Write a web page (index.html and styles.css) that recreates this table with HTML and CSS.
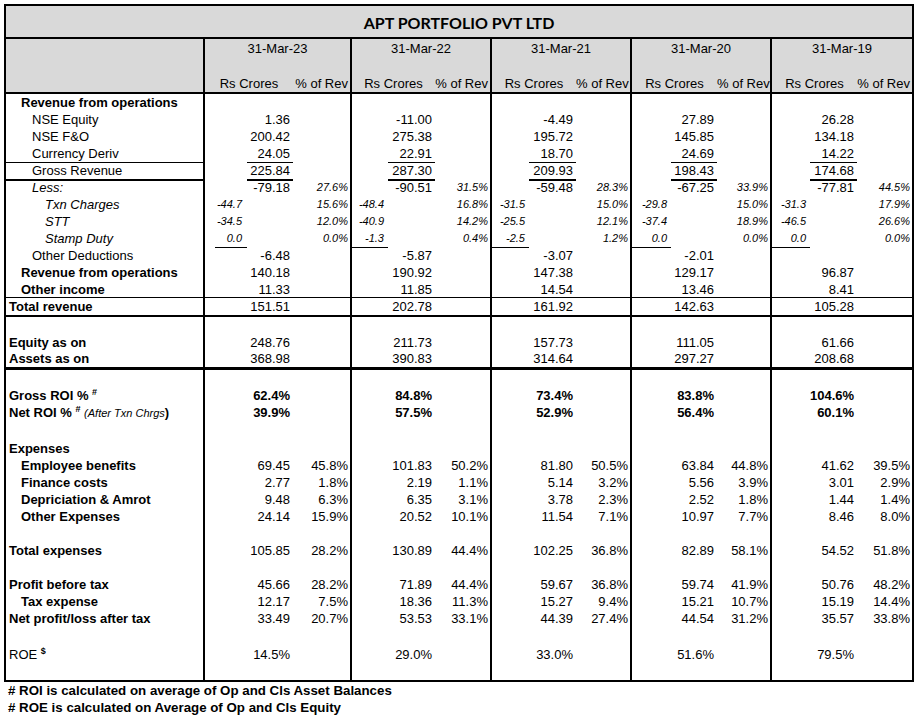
FILE: index.html
```html
<!DOCTYPE html>
<html>
<head>
<meta charset="utf-8">
<link rel="stylesheet" href="styles.css">
</head>
<body>
<div class="sheet">
  <div class="title">APT PORTFOLIO PVT LTD</div>
  <div class="hdr">
    <div class="row h1"><div class="lbl"></div>
      <div class="blk"><div class="d">31-Mar-23</div></div>
      <div class="blk"><div class="d">31-Mar-22</div></div>
      <div class="blk"><div class="d">31-Mar-21</div></div>
      <div class="blk"><div class="d">31-Mar-20</div></div>
      <div class="blk"><div class="d">31-Mar-19</div></div>
    </div>
    <div class="row h2"><div class="lbl"></div><div class="blk"></div><div class="blk"></div><div class="blk"></div><div class="blk"></div><div class="blk"></div></div>
    <div class="row h3"><div class="lbl"></div>
      <div class="blk"><div class="rc">Rs Crores</div><div class="c">% of Rev</div></div>
      <div class="blk"><div class="rc">Rs Crores</div><div class="c">% of Rev</div></div>
      <div class="blk"><div class="rc">Rs Crores</div><div class="c">% of Rev</div></div>
      <div class="blk"><div class="rc">Rs Crores</div><div class="c">% of Rev</div></div>
      <div class="blk"><div class="rc">Rs Crores</div><div class="c">% of Rev</div></div>
    </div>
  </div>

  <div class="row"><div class="lbl i1 bd">Revenue from operations</div><div class="blk"></div><div class="blk"></div><div class="blk"></div><div class="blk"></div><div class="blk"></div></div>

  <div class="row"><div class="lbl i2">NSE Equity</div>
    <div class="blk"><div class="b">1.36</div></div>
    <div class="blk"><div class="b">-11.00</div></div>
    <div class="blk"><div class="b">-4.49</div></div>
    <div class="blk"><div class="b">27.89</div></div>
    <div class="blk"><div class="b">26.28</div></div>
  </div>

  <div class="row"><div class="lbl i2">NSE F&amp;O</div>
    <div class="blk"><div class="b">200.42</div></div>
    <div class="blk"><div class="b">275.38</div></div>
    <div class="blk"><div class="b">195.72</div></div>
    <div class="blk"><div class="b">145.85</div></div>
    <div class="blk"><div class="b">134.18</div></div>
  </div>

  <div class="row"><div class="lbl i2 ul1">Currency Deriv</div>
    <div class="blk"><div class="b ul1">24.05</div></div>
    <div class="blk"><div class="b ul1">22.91</div></div>
    <div class="blk"><div class="b ul1">18.70</div></div>
    <div class="blk"><div class="b ul1">24.69</div></div>
    <div class="blk"><div class="b ul1">14.22</div></div>
  </div>

  <div class="row"><div class="lbl i2 ul2">Gross Revenue</div>
    <div class="blk"><div class="b ul2">225.84</div></div>
    <div class="blk"><div class="b ul2">287.30</div></div>
    <div class="blk"><div class="b ul2">209.93</div></div>
    <div class="blk"><div class="b ul2">198.43</div></div>
    <div class="blk"><div class="b ul2">174.68</div></div>
  </div>

  <div class="row"><div class="lbl i2 it">Less:</div>
    <div class="blk"><div class="b">-79.18</div><div class="c ci">27.6%</div></div>
    <div class="blk"><div class="b">-90.51</div><div class="c ci">31.5%</div></div>
    <div class="blk"><div class="b">-59.48</div><div class="c ci">28.3%</div></div>
    <div class="blk"><div class="b">-67.25</div><div class="c ci">33.9%</div></div>
    <div class="blk"><div class="b">-77.81</div><div class="c ci">44.5%</div></div>
  </div>

  <div class="row"><div class="lbl i3 it">Txn Charges</div>
    <div class="blk"><div class="a">-44.7</div><div class="c ci">15.6%</div></div>
    <div class="blk"><div class="a">-48.4</div><div class="c ci">16.8%</div></div>
    <div class="blk"><div class="a">-31.5</div><div class="c ci">15.0%</div></div>
    <div class="blk"><div class="a">-29.8</div><div class="c ci">15.0%</div></div>
    <div class="blk"><div class="a">-31.3</div><div class="c ci">17.9%</div></div>
  </div>

  <div class="row"><div class="lbl i3 it">STT</div>
    <div class="blk"><div class="a">-34.5</div><div class="c ci">12.0%</div></div>
    <div class="blk"><div class="a">-40.9</div><div class="c ci">14.2%</div></div>
    <div class="blk"><div class="a">-25.5</div><div class="c ci">12.1%</div></div>
    <div class="blk"><div class="a">-37.4</div><div class="c ci">18.9%</div></div>
    <div class="blk"><div class="a">-46.5</div><div class="c ci">26.6%</div></div>
  </div>

  <div class="row"><div class="lbl i3 it">Stamp Duty</div>
    <div class="blk"><div class="a u">0.0</div><div class="c ci">0.0%</div></div>
    <div class="blk"><div class="a u">-1.3</div><div class="c ci">0.4%</div></div>
    <div class="blk"><div class="a u">-2.5</div><div class="c ci">1.2%</div></div>
    <div class="blk"><div class="a u">0.0</div><div class="c ci">0.0%</div></div>
    <div class="blk"><div class="a u">0.0</div><div class="c ci">0.0%</div></div>
  </div>

  <div class="row"><div class="lbl i2">Other Deductions</div>
    <div class="blk"><div class="b">-6.48</div></div>
    <div class="blk"><div class="b">-5.87</div></div>
    <div class="blk"><div class="b">-3.07</div></div>
    <div class="blk"><div class="b">-2.01</div></div>
    <div class="blk"></div>
  </div>

  <div class="row"><div class="lbl i1 bd">Revenue from operations</div>
    <div class="blk"><div class="b">140.18</div></div>
    <div class="blk"><div class="b">190.92</div></div>
    <div class="blk"><div class="b">147.38</div></div>
    <div class="blk"><div class="b">129.17</div></div>
    <div class="blk"><div class="b">96.87</div></div>
  </div>

  <div class="row line1"><div class="lbl i1 bd">Other income</div>
    <div class="blk"><div class="b">11.33</div></div>
    <div class="blk"><div class="b">11.85</div></div>
    <div class="blk"><div class="b">14.54</div></div>
    <div class="blk"><div class="b">13.46</div></div>
    <div class="blk"><div class="b">8.41</div></div>
  </div>

  <div class="row line2"><div class="lbl bd">Total revenue</div>
    <div class="blk"><div class="b">151.51</div></div>
    <div class="blk"><div class="b">202.78</div></div>
    <div class="blk"><div class="b">161.92</div></div>
    <div class="blk"><div class="b">142.63</div></div>
    <div class="blk"><div class="b">105.28</div></div>
  </div>

  <div class="row"><div class="lbl"></div><div class="blk"></div><div class="blk"></div><div class="blk"></div><div class="blk"></div><div class="blk"></div></div>

  <div class="row"><div class="lbl bd">Equity as on</div>
    <div class="blk"><div class="b">248.76</div></div>
    <div class="blk"><div class="b">211.73</div></div>
    <div class="blk"><div class="b">157.73</div></div>
    <div class="blk"><div class="b">111.05</div></div>
    <div class="blk"><div class="b">61.66</div></div>
  </div>

  <div class="row line3"><div class="lbl bd">Assets as on</div>
    <div class="blk"><div class="b">368.98</div></div>
    <div class="blk"><div class="b">390.83</div></div>
    <div class="blk"><div class="b">314.64</div></div>
    <div class="blk"><div class="b">297.27</div></div>
    <div class="blk"><div class="b">208.68</div></div>
  </div>

  <div class="row"><div class="lbl"></div><div class="blk"></div><div class="blk"></div><div class="blk"></div><div class="blk"></div><div class="blk"></div></div>

  <div class="row"><div class="lbl bd">Gross ROI % <sup class="sup">#</sup></div>
    <div class="blk"><div class="b bd">62.4%</div></div>
    <div class="blk"><div class="b bd">84.8%</div></div>
    <div class="blk"><div class="b bd">73.4%</div></div>
    <div class="blk"><div class="b bd">83.8%</div></div>
    <div class="blk"><div class="b bd">104.6%</div></div>
  </div>

  <div class="row"><div class="lbl bd">Net ROI % <sup class="sup">#</sup> <span class="note">(After Txn Chrgs</span>)</div>
    <div class="blk"><div class="b bd">39.9%</div></div>
    <div class="blk"><div class="b bd">57.5%</div></div>
    <div class="blk"><div class="b bd">52.9%</div></div>
    <div class="blk"><div class="b bd">56.4%</div></div>
    <div class="blk"><div class="b bd">60.1%</div></div>
  </div>

  <div class="row tall"><div class="lbl"></div><div class="blk"></div><div class="blk"></div><div class="blk"></div><div class="blk"></div><div class="blk"></div></div>

  <div class="row"><div class="lbl bd">Expenses</div><div class="blk"></div><div class="blk"></div><div class="blk"></div><div class="blk"></div><div class="blk"></div></div>

  <div class="row"><div class="lbl i1 bd">Employee benefits</div>
    <div class="blk"><div class="b">69.45</div><div class="c">45.8%</div></div>
    <div class="blk"><div class="b">101.83</div><div class="c">50.2%</div></div>
    <div class="blk"><div class="b">81.80</div><div class="c">50.5%</div></div>
    <div class="blk"><div class="b">63.84</div><div class="c">44.8%</div></div>
    <div class="blk"><div class="b">41.62</div><div class="c">39.5%</div></div>
  </div>

  <div class="row"><div class="lbl i1 bd">Finance costs</div>
    <div class="blk"><div class="b">2.77</div><div class="c">1.8%</div></div>
    <div class="blk"><div class="b">2.19</div><div class="c">1.1%</div></div>
    <div class="blk"><div class="b">5.14</div><div class="c">3.2%</div></div>
    <div class="blk"><div class="b">5.56</div><div class="c">3.9%</div></div>
    <div class="blk"><div class="b">3.01</div><div class="c">2.9%</div></div>
  </div>

  <div class="row"><div class="lbl i1 bd">Depriciation &amp; Amrot</div>
    <div class="blk"><div class="b">9.48</div><div class="c">6.3%</div></div>
    <div class="blk"><div class="b">6.35</div><div class="c">3.1%</div></div>
    <div class="blk"><div class="b">3.78</div><div class="c">2.3%</div></div>
    <div class="blk"><div class="b">2.52</div><div class="c">1.8%</div></div>
    <div class="blk"><div class="b">1.44</div><div class="c">1.4%</div></div>
  </div>

  <div class="row"><div class="lbl i1 bd">Other Expenses</div>
    <div class="blk"><div class="b">24.14</div><div class="c">15.9%</div></div>
    <div class="blk"><div class="b">20.52</div><div class="c">10.1%</div></div>
    <div class="blk"><div class="b">11.54</div><div class="c">7.1%</div></div>
    <div class="blk"><div class="b">10.97</div><div class="c">7.7%</div></div>
    <div class="blk"><div class="b">8.46</div><div class="c">8.0%</div></div>
  </div>

  <div class="row"><div class="lbl"></div><div class="blk"></div><div class="blk"></div><div class="blk"></div><div class="blk"></div><div class="blk"></div></div>

  <div class="row"><div class="lbl bd">Total expenses</div>
    <div class="blk"><div class="b">105.85</div><div class="c">28.2%</div></div>
    <div class="blk"><div class="b">130.89</div><div class="c">44.4%</div></div>
    <div class="blk"><div class="b">102.25</div><div class="c">36.8%</div></div>
    <div class="blk"><div class="b">82.89</div><div class="c">58.1%</div></div>
    <div class="blk"><div class="b">54.52</div><div class="c">51.8%</div></div>
  </div>

  <div class="row"><div class="lbl"></div><div class="blk"></div><div class="blk"></div><div class="blk"></div><div class="blk"></div><div class="blk"></div></div>

  <div class="row"><div class="lbl bd">Profit before tax</div>
    <div class="blk"><div class="b">45.66</div><div class="c">28.2%</div></div>
    <div class="blk"><div class="b">71.89</div><div class="c">44.4%</div></div>
    <div class="blk"><div class="b">59.67</div><div class="c">36.8%</div></div>
    <div class="blk"><div class="b">59.74</div><div class="c">41.9%</div></div>
    <div class="blk"><div class="b">50.76</div><div class="c">48.2%</div></div>
  </div>

  <div class="row"><div class="lbl i1 bd">Tax expense</div>
    <div class="blk"><div class="b">12.17</div><div class="c">7.5%</div></div>
    <div class="blk"><div class="b">18.36</div><div class="c">11.3%</div></div>
    <div class="blk"><div class="b">15.27</div><div class="c">9.4%</div></div>
    <div class="blk"><div class="b">15.21</div><div class="c">10.7%</div></div>
    <div class="blk"><div class="b">15.19</div><div class="c">14.4%</div></div>
  </div>

  <div class="row"><div class="lbl bd">Net profit/loss after tax</div>
    <div class="blk"><div class="b">33.49</div><div class="c">20.7%</div></div>
    <div class="blk"><div class="b">53.53</div><div class="c">33.1%</div></div>
    <div class="blk"><div class="b">44.39</div><div class="c">27.4%</div></div>
    <div class="blk"><div class="b">44.54</div><div class="c">31.2%</div></div>
    <div class="blk"><div class="b">35.57</div><div class="c">33.8%</div></div>
  </div>

  <div class="row tall"><div class="lbl"></div><div class="blk"></div><div class="blk"></div><div class="blk"></div><div class="blk"></div><div class="blk"></div></div>

  <div class="row"><div class="lbl">ROE <sup class="sup">$</sup></div>
    <div class="blk"><div class="b">14.5%</div></div>
    <div class="blk"><div class="b">29.0%</div></div>
    <div class="blk"><div class="b">33.0%</div></div>
    <div class="blk"><div class="b">51.6%</div></div>
    <div class="blk"><div class="b">79.5%</div></div>
  </div>

  <div class="row"><div class="lbl"></div><div class="blk"></div><div class="blk"></div><div class="blk"></div><div class="blk"></div><div class="blk"></div></div>
</div>
<div class="notes">
  <div># ROI is calculated on average of Op and Cls Asset Balances</div>
  <div># ROE is calculated on Average of Op and Cls Equity</div>
</div>
</body>
</html>
```
FILE: styles.css
```css
* { box-sizing: border-box; }
html, body { margin: 0; padding: 0; background: #fff; }
body {
  font-family: "Liberation Sans", Arial, sans-serif;
  font-size: 13px;
  color: #000;
}
.sheet {
  margin: 4px 0 0 4px;
  width: 910px;
  border: 2px solid #000;
}
.title {
  height: 33px;
  background: #d9d9d9;
  border-bottom: 2px solid #000;
  font-family: Lato, "Open Sans", sans-serif;
  font-weight: 700;
  font-size: 16px;
  display: flex;
  align-items: center;
  justify-content: center;
  padding-top: 1px;
}
.hdr { background: #d9d9d9; }
.row {
  display: grid;
  grid-template-columns: 197px 147px 140px 140px 140px 142px;
  height: 17px;
  line-height: 17px;
  white-space: nowrap;
}
.row.h1 { height: 18px; line-height: 19px; }
.row.h2 { height: 18px; }
.row.h3 { height: 19px; border-bottom: 2px solid #000; }
.row.line1 { border-bottom: 1px solid #000; }
.row.line2 { height: 19px; border-bottom: 2px solid #000; }
.row.line3 { height: 19px; border-bottom: 3px solid #000; line-height: 16px; }
.row.tall { height: 19px; }

.blk {
  display: grid;
  border-left: 2px solid #000;
  grid-template-rows: 100%;
}
.blk:nth-child(2) { grid-template-columns: 42px 46px 57px; }
.blk:nth-child(3) { grid-template-columns: 36px 47px 55px; }
.blk:nth-child(4) { grid-template-columns: 37px 47px 54px; }
.blk:nth-child(5) { grid-template-columns: 39px 46px 53px; }
.blk:nth-child(6) { grid-template-columns: 38px 47px 55px; }

.lbl { padding-left: 3px; }
.lbl.i1 { padding-left: 15px; }
.lbl.i2 { padding-left: 26px; }
.lbl.i3 { padding-left: 39px; }
.bd { font-weight: 700; }
.it { font-style: italic; }

.a {
  grid-column: 1;
  text-align: right;
  padding-right: 4px;
  font-style: italic;
  font-size: 11px;
}
.blk:nth-child(2) .a { padding-right: 5px; }
.a.u { border-bottom: 1px solid #000; }
.blk:nth-child(2) .a.u { margin-left: 10px; }
.b {
  grid-column: 2;
  text-align: right;
  padding-right: 3px;
}
.c {
  grid-column: 3;
  text-align: right;
  padding-right: 2px;
}
.ci { font-style: italic; font-size: 11px; }
.d { grid-column: 1 / 4; text-align: center; }
.rc { grid-column: 1 / 3; text-align: center; }
.ul1 { border-bottom: 1px solid #000; }
.ul2 { border-bottom: 2px solid #000; }

.sup {
  font-size: 9px;
  font-weight: 700;
  vertical-align: 5px;
  line-height: 0;
}
.note {
  font-style: italic;
  font-weight: 400;
  font-size: 11px;
}
.notes {
  padding-left: 8px;
  font-weight: 700;
  font-size: 13.3px;
  line-height: 17px;
}
```
